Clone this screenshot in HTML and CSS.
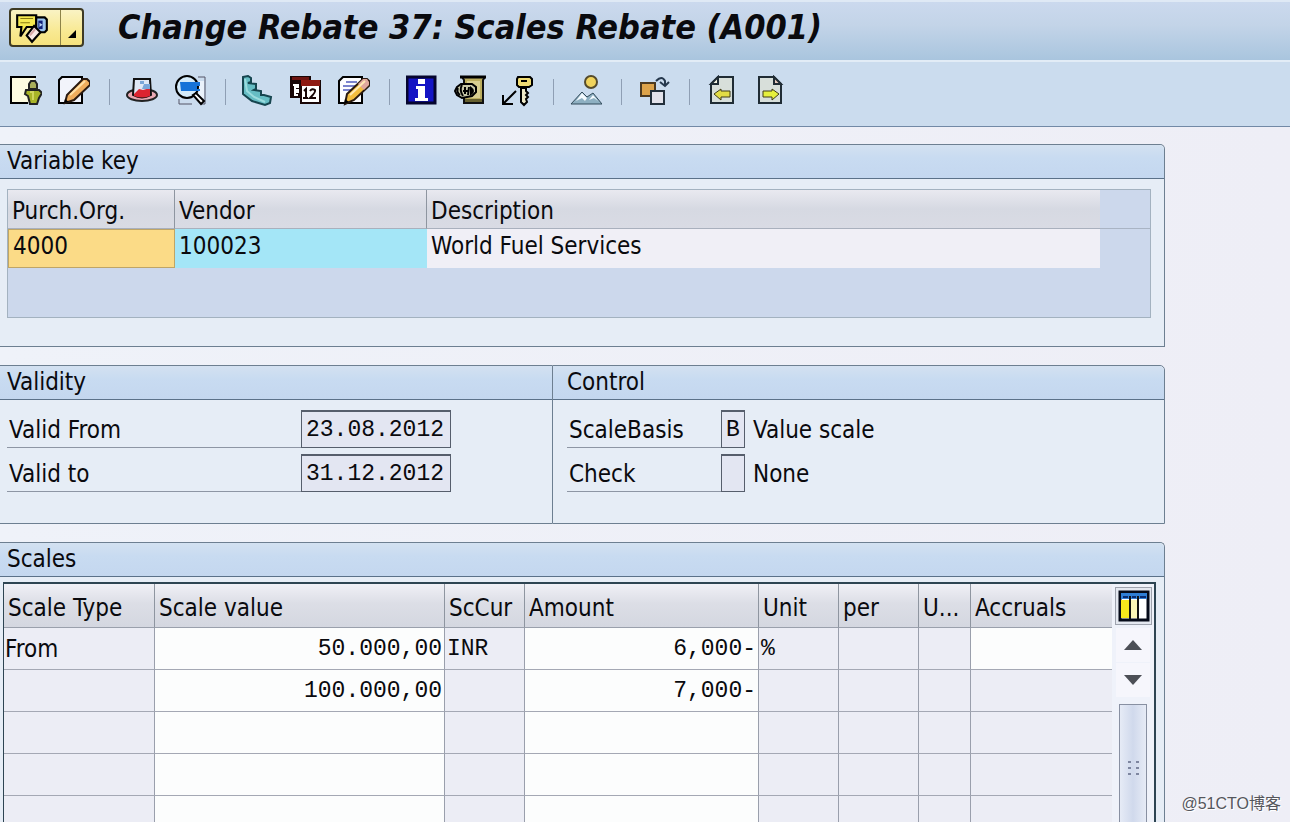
FILE: index.html
```html
<!DOCTYPE html>
<html lang="en">
<head>
<meta charset="utf-8">
<title>Change Rebate 37: Scales Rebate (A001)</title>
<link rel="stylesheet" href="styles.css">
</head>
<body>
<header class="titlebar">
  <div class="menu-group">
    <button class="menu-main" aria-label="Services for object">
      <svg width="36" height="34" viewBox="0 0 34 32">
        <path d="M3 4h18v11h-9l-6 9 1-9H3z" fill="#f6ea50" stroke="#000" stroke-width="2"/>
        <path d="M6 7h12M6 11h9" stroke="#8a7c10" stroke-width="1"/>
        <path d="M21 6h8l2 2v10l-2 2h-8z" fill="#9cc4ee" stroke="#000" stroke-width="2"/>
        <path d="M23 9h4v8h-4z" fill="#10207a"/>
        <path d="M24 11l3 2-3 2z" fill="#bcd8f6"/>
        <path d="M12 23l7-9 6 6-8 9z" fill="#f8e8e6" stroke="#000" stroke-width="2"/>
        <path d="M15 23l5-6" stroke="#d8a8a8" stroke-width="2"/>
      </svg>
    </button>
    <button class="menu-more" aria-label="More services">
      <svg width="10" height="10" viewBox="0 0 10 10"><path d="M9 1v8H1z" fill="#000"/></svg>
    </button>
  </div>
  <h1>Change Rebate 37: Scales Rebate (A001)</h1>
</header>

<nav class="toolbar" aria-label="Application toolbar">
  <button aria-label="Other rebate">
    <svg viewBox="0 0 32 32"><path d="M1 2h24v26H1z" fill="#fdfbe0"/><path d="M26 2H1v26h17" fill="none" stroke="#000" stroke-width="2"/><path d="M19 14v-5l2-3h4l2 3v5z" fill="#a8ad5a" stroke="#222" stroke-width="2"/><path d="M16 15h13l3 3-3 5-2 6h-7l-2-8-3-2z" fill="#a9b428" stroke="#222" stroke-width="2"/><path d="M20 17h3v8" fill="none" stroke="#d0d65c" stroke-width="2"/></svg>
  </button>
  <button aria-label="Change condition">
    <svg viewBox="0 0 32 32"><path d="M4 2h20v26H1V5z" fill="#f2f4fb" stroke="#000" stroke-width="2"/><path d="M9 20L25 4h4l3 3v3L16 25l-9 3z" fill="#efad5d" stroke="#2a1a10" stroke-width="2"/><path d="M12 20L27 6" stroke="#ffe0a6" stroke-width="2"/><path d="M6 28l1-4 4 3z" fill="#000"/></svg>
  </button>
  <span class="sep"></span>
  <button aria-label="Header details">
    <svg viewBox="0 0 32 32"><ellipse cx="16" cy="20" rx="15" ry="6" fill="#e9a9b3" stroke="#222" stroke-width="2"/><path d="M8 4h16l1 16q-9 5-18 0z" fill="#dfe8f6" stroke="#111" stroke-width="2"/><path d="M8 19l5-5 4 1 7-2v8q-8 3-16 0z" fill="#dc2430"/><path d="M14 6h4v3h-4zM18 9h6v5h-8z" fill="#7aa6d8"/></svg>
  </button>
  <button aria-label="Details">
    <svg viewBox="0 0 32 32"><path d="M24 2h7v27h-4M18 29H5v-5" fill="none" stroke="#556" stroke-width="1"/><path d="M25 6h5v17h-6z" fill="#eaf2fb"/><circle cx="13" cy="12" r="11" fill="#d5ebfa" stroke="#000" stroke-width="2"/><path d="M6 7h20v4h-3v3h3v2H7z" fill="#1673d8"/><path d="M19 20l3-2 8 8-3 3z" fill="#fff" stroke="#000" stroke-width="2"/></svg>
  </button>
  <span class="sep"></span>
  <button aria-label="Scales">
    <svg viewBox="0 0 32 32"><path d="M1 2l5-1 3 2v4l-3 1 8 1v5l-2 1 7 1v4h3l7 2-1 6-5 2-13-4-9-7z" fill="#66bdc4" stroke="#16454f" stroke-width="2"/><path d="M3 4l2 12 7 6 11 5" fill="none" stroke="#9bdcde" stroke-width="2"/></svg>
  </button>
  <button aria-label="Validity periods">
    <svg viewBox="0 0 32 32"><path d="M0 1h21v6H12v16H0z" fill="#180606"/><path d="M2 2h17v3H2z" fill="#6d1410"/><path d="M3 10h5v2H5v3h3v2H5v3h3" fill="none" stroke="#fff" stroke-width="2"/><path d="M11 6h19v22H11z" fill="#fff" stroke="#180606" stroke-width="2"/><path d="M11 5h19v6H11z" fill="#8e1a12"/><path d="M14 16l2-2v9M13 23h5M20 16q2-3 5-1 1 2-5 8h6" fill="none" stroke="#180606" stroke-width="2"/></svg>
  </button>
  <button aria-label="Texts">
    <svg viewBox="0 0 32 32"><path d="M5 2h19v26H1V6z" fill="#fdfdff" stroke="#000" stroke-width="2"/><path d="M8 7h11M5 11h12M5 15h8" stroke="#7b83cd" stroke-width="2"/><path d="M9 19L25 4h4l3 3v3L16 25l-9 4z" fill="#f3bd3e" stroke="#2a1a10" stroke-width="2"/><path d="M20 9l5-5h4l2 3v3l-5 5z" fill="#e0a89d"/><path d="M12 20L27 6" stroke="#ffe9b4" stroke-width="2"/><path d="M6 29l1-5 4 3z" fill="#000"/></svg>
  </button>
  <span class="sep"></span>
  <button aria-label="Information">
    <svg viewBox="0 0 32 32"><path d="M1 2h28v26H1z" fill="#1414c4" stroke="#05052e" stroke-width="3"/><path d="M12 4h7v5h-7zM10 11h9v12h3v3H9v-3h3v-9h-2z" fill="#fff"/></svg>
  </button>
  <button aria-label="Condition info">
    <svg viewBox="0 0 32 32"><path d="M8 2h23l-2 3v23H10V5z" fill="#bcae5e" stroke="#111" stroke-width="2"/><path d="M6 2h26" stroke="#000" stroke-width="3"/><path d="M13 6h13v17H13z" fill="#d9cf90"/><path d="M11 24h17v3H11z" fill="#66602f"/><path d="M3 12l4-3h11l4 3v5l-4 4-10 2-5-3-2-4z" fill="#c8c8a8" stroke="#000" stroke-width="2"/><path d="M4 13q-2 4 2 7M8 10q-3 5 1 11M11 12v7M9 16h5M15 12l-1 8M17 13q4 3 0 6z" stroke="#000" stroke-width="2" fill="none"/></svg>
  </button>
  <button aria-label="Key display">
    <svg viewBox="0 0 32 32"><path d="M16 2h12l2 2v6l-3 2H17l-2-2V4z" fill="#f0dc74" stroke="#000" stroke-width="2"/><path d="M19 6h6" stroke="#000" stroke-width="2"/><path d="M19 13h5v3l2 2-2 2 2 2-2 2 1 3-3 3-3-3z" fill="#eee9c8" stroke="#000" stroke-width="2"/><path d="M14 16L1 29M1 20v9h10" fill="none" stroke="#000" stroke-width="2"/></svg>
  </button>
  <span class="sep"></span>
  <button aria-label="Overview">
    <svg viewBox="0 0 32 32"><circle cx="21" cy="7" r="6" fill="#f0d35c" stroke="#554b2b" stroke-width="2"/><path d="M1 29l11-12 5 5 6-4 9 11z" fill="#8eb0c2" stroke="#334b5a" stroke-width="1"/><path d="M12 18l-6 8 6-3 3 3 2-3zM23 20l-4 5 5-2 4 3z" fill="#f5fbff"/></svg>
  </button>
  <span class="sep"></span>
  <button aria-label="Exchange">
    <svg viewBox="0 0 32 32"><path d="M3 8h14v13H3z" fill="#dda34a" stroke="#4d3a20" stroke-width="2"/><path d="M13 16h13v13H13z" fill="#e2e2ea" stroke="#222f3b" stroke-width="2"/><path d="M18 6q6-6 9 0v5M22 7l5 4 4-4" fill="none" stroke="#26384c" stroke-width="2"/></svg>
  </button>
  <span class="sep"></span>
  <button aria-label="Previous page">
    <svg viewBox="0 0 32 32"><path d="M12 2h15v26H5V9z" fill="#d8dfda" stroke="#202c34" stroke-width="2"/><path d="M5 9h7V2z" fill="#f5f6e4" stroke="#202c34" stroke-width="2"/><path d="M8 19l7-5v2h9v6h-9v3z" fill="#e2dc45" stroke="#403d16" stroke-width="1"/></svg>
  </button>
  <button aria-label="Next page">
    <svg viewBox="0 0 32 32"><path d="M5 2h15l7 7v19H5z" fill="#d8dfda" stroke="#202c34" stroke-width="2"/><path d="M20 2v7h7z" fill="#e7c9bd" stroke="#202c34" stroke-width="2"/><path d="M25 19l-7-5v2H9v6h9v3z" fill="#e6f03d" stroke="#403d16" stroke-width="1"/></svg>
  </button>
</nav>

<main class="content">
  <section class="panel">
    <h2>Variable key</h2>
    <div class="key-box">
      <table class="key-table">
        <colgroup><col class="k-org"><col class="k-vendor"><col><col class="k-rest"></colgroup>
        <thead><tr><th>Purch.Org.</th><th>Vendor</th><th>Description</th><td class="rest"></td></tr></thead>
        <tbody><tr><td class="org">4000</td><td class="vendor">100023</td><td class="desc">World Fuel Services</td><td class="rest"></td></tr></tbody>
      </table>
    </div>
  </section>

  <div class="pair">
    <section class="panel panel-validity">
      <h2>Validity</h2>
      <div class="fields">
        <div class="field"><label for="from">Valid From</label><input id="from" class="date" value="23.08.2012" readonly></div>
        <div class="field"><label for="to">Valid to</label><input id="to" class="date" value="31.12.2012" readonly></div>
      </div>
    </section>
    <section class="panel panel-control">
      <h2>Control</h2>
      <div class="fields">
        <div class="field"><label for="basis">ScaleBasis</label><input id="basis" class="code" value="B" readonly><span class="note">Value scale</span></div>
        <div class="field"><label for="check">Check</label><input id="check" class="code" value="" readonly><span class="note">None</span></div>
      </div>
    </section>
  </div>

  <section class="panel panel-scales">
    <h2>Scales</h2>
    <div class="grid">
      <table class="scale-table">
        <colgroup><col class="s-type"><col class="s-value"><col class="s-small"><col class="s-amount"><col class="s-small"><col class="s-small"><col class="s-uom"><col></colgroup>
        <thead><tr><th>Scale Type</th><th>Scale value</th><th>ScCur</th><th>Amount</th><th>Unit</th><th>per</th><th>U...</th><th>Accruals</th></tr></thead>
        <tbody>
          <tr><td>From</td><td class="edit"><input aria-label="Scale value 1" value="50.000,00"></td><td class="mono">INR</td><td class="edit"><input aria-label="Amount 1" value="6,000-"></td><td class="mono">%</td><td></td><td></td><td class="edit"><input aria-label="Accruals 1"></td></tr>
          <tr><td></td><td class="edit"><input aria-label="Scale value 2" value="100.000,00"></td><td></td><td class="edit"><input aria-label="Amount 2" value="7,000-"></td><td></td><td></td><td></td><td></td></tr>
          <tr><td></td><td class="edit"><input aria-label="Scale value 3"></td><td></td><td class="edit"><input aria-label="Amount 3"></td><td></td><td></td><td></td><td></td></tr>
          <tr><td></td><td class="edit"><input aria-label="Scale value 4"></td><td></td><td class="edit"><input aria-label="Amount 4"></td><td></td><td></td><td></td><td></td></tr>
          <tr><td></td><td class="edit"><input aria-label="Scale value 5"></td><td></td><td class="edit"><input aria-label="Amount 5"></td><td></td><td></td><td></td><td></td></tr>
        </tbody>
      </table>
      <div class="side">
        <button class="config" aria-label="Table settings">
          <svg width="32" height="32" viewBox="0 0 32 32"><path d="M2 2h28v28H2z" fill="#fff" stroke="#050a18" stroke-width="3"/><path d="M3 10h9v18H3z" fill="#f7e81c"/><path d="M13 10h6v18h-6z" fill="#fbf6b6"/><path d="M3 3h26v6H3z" fill="#2f7fd6"/><path d="M12 6v23M20 6v23" stroke="#111" stroke-width="2"/><path d="M5 7h5M14 7h4M22 7h6" stroke="#0a2b70" stroke-width="2"/></svg>
        </button>
        <button class="arrow" aria-label="Scroll up"><svg width="18" height="10" viewBox="0 0 18 10"><path d="M9 0l9 10H0z" fill="#4c4f56"/></svg></button>
        <button class="arrow" aria-label="Scroll down"><svg width="18" height="10" viewBox="0 0 18 10"><path d="M9 10l9-10H0z" fill="#4c4f56"/></svg></button>
        <div class="thumb"><svg width="14" height="18" viewBox="0 0 14 18"><path d="M1 3h3M9 3h3M1 9h3M9 9h3M1 15h3M9 15h3" stroke="#7e86a0" stroke-width="2"/></svg></div>
      </div>
    </div>
  </section>
</main>
<div class="watermark">@51CTO博客</div>
</body>
</html>
```
FILE: styles.css
```css
* { box-sizing: border-box; }

body {
  margin: 0;
  height: 100vh;
  overflow: hidden;
  display: flex;
  flex-direction: column;
  background: #eeeef6;
  color: #0a0a0e;
  font-family: "DejaVu Sans Condensed", "DejaVu Sans", sans-serif;
  font-size: 24px;
  line-height: 28px;
}

button {
  padding: 0;
  border: 0;
  background: none;
}

svg { display: block; }

input {
  font-family: "Liberation Mono", monospace;
  font-size: 23px;
  color: #0a0a0e;
  border: 0;
  border-radius: 0;
  outline: 0;
}

.titlebar {
  flex: none;
  display: flex;
  align-items: flex-start;
  gap: 34px;
  height: 62px;
  padding: 6px 9px 0;
  background: linear-gradient(#cbd9ee, #c3d4e8 40%, #a9c5de);
  border-top: 2px solid #dfe9f5;
  border-bottom: 2px solid #e2ecf6;
}

.titlebar h1 {
  margin: 0;
  font-size: 34px;
  line-height: 38px;
  font-style: italic;
  font-weight: bold;
  white-space: nowrap;
}

.menu-group {
  display: flex;
  width: 75px;
  height: 39px;
  border: 2px solid #3e3a24;
  border-radius: 4px;
  background: linear-gradient(#faf3c4, #f8e993 60%, #f6e27e);
}

.menu-main {
  flex: 1;
  padding-left: 3px;
}

.menu-more {
  display: flex;
  align-items: flex-end;
  justify-content: center;
  width: 22px;
  padding-bottom: 6px;
  border-left: 1px solid #8d8348;
}

.toolbar {
  flex: none;
  display: flex;
  gap: 16px;
  height: 65px;
  padding: 13px 10px 0;
  background: #cbdcee;
  border-bottom: 1px solid #7289a6;
}

.toolbar button,
.toolbar svg {
  width: 32px;
  height: 32px;
}

.toolbar .sep {
  width: 4px;
  height: 26px;
  margin-top: 4px;
  border-right: 1px solid #8f9fb4;
}

.content {
  flex: 1;
  min-height: 0;
  display: flex;
  flex-direction: column;
  gap: 18px;
  padding: 17px 125px 0 0;
  background: linear-gradient(to right, #eff2f9, #eeeef6);
}

.panel {
  border: 1px solid #6d7f91;
  border-left: 0;
  border-top-right-radius: 5px;
  background: #e6edf6;
}

.panel h2 {
  margin: 0;
  height: 34px;
  padding: 2px 7px;
  font-size: 24px;
  line-height: 28px;
  font-weight: normal;
  border-bottom: 1px solid #5b7189;
  border-top-right-radius: 5px;
  background: linear-gradient(#d3e1f1, #c8dbf1 40%, #c4d7ef);
}

.key-box {
  height: 129px;
  margin: 10px 13px 28px 7px;
  border: 1px solid #a3b2c0;
  background: #ccd8ec;
}

table {
  width: 100%;
  table-layout: fixed;
  border-collapse: separate;
  border-spacing: 0;
}

th, td {
  padding: 0 4px;
  font-weight: normal;
  text-align: left;
  white-space: nowrap;
  overflow: hidden;
}

.k-org { width: 167px; }
.k-vendor { width: 252px; }
.k-rest { width: 50px; }

.key-table th {
  height: 39px;
  padding-top: 4px;
  border-right: 1px solid #8e95a0;
  border-bottom: 1px solid #a9b0bd;
  background: linear-gradient(#e9e9f0, #d6d9e2 50%, #d9dbe4);
}

.key-table th:nth-child(3) { border-right: 0; }
.key-table thead .rest { border-bottom: 1px solid #a9b4c4; }

.key-table tbody td {
  height: 39px;
  padding-bottom: 5px;
}

.key-table .org {
  border: 1px solid #bfa566;
  background: #fbdb87;
}

.key-table .vendor { background: #a4e6f7; }
.key-table .desc { background: #f0eff6; }

.pair {
  display: grid;
  grid-template-columns: 552px 1fr;
}

.panel-validity {
  border-right: 0;
  border-radius: 0;
}

.panel-validity h2 { border-radius: 0; }

.panel-control { border-left: 1px solid #6d7f91; }
.panel-control h2 { padding-left: 14px; }

.fields {
  display: flex;
  flex-direction: column;
  gap: 6px;
  padding: 10px 7px 31px;
}

.panel-control .fields { padding-left: 14px; }

.field {
  display: flex;
  height: 38px;
}

.field label {
  width: 294px;
  padding: 6px 2px 0;
  border-bottom: 1px solid #8e96a4;
}

.panel-control label { width: 154px; }

.field input {
  border: 1px solid #565e6c;
  border-top-width: 2px;
  background: #e3e6f2;
}

.field .date {
  width: 150px;
  padding: 0 4px;
}

.field .code {
  width: 24px;
  padding: 0 4px;
}

.note { padding: 6px 8px 0; }

.panel-scales {
  flex: 1;
  min-height: 0;
  border-bottom: 0;
}

.grid {
  display: flex;
  height: 100%;
  margin: 5px 8px 0 3px;
  border: 2px solid #2d4452;
  border-left-width: 1px;
  border-bottom: 0;
  background: #eeeef6;
}

.scale-table {
  flex: 1;
  min-width: 0;
  align-self: flex-start;
}

.s-type { width: 151px; }
.s-value { width: 290px; }
.s-small { width: 80px; }
.s-amount { width: 234px; }
.s-uom { width: 52px; }

.scale-table th {
  height: 44px;
  padding-top: 5px;
  border-right: 1px solid #8e95a0;
  border-bottom: 1px solid #9aa0ac;
  background: linear-gradient(#f0f0f6, #dcdee6 45%, #d4d7e0);
}

.scale-table td {
  height: 42px;
  padding: 0 0 0 1px;
  border-right: 1px solid #9a9fac;
  border-bottom: 1px solid #a4a8b4;
  background: #ecedf5;
}

.scale-table th:last-child,
.scale-table td:last-child { border-right: 0; }

.scale-table .edit { background: #fcfdfd; }

.scale-table .edit input {
  display: block;
  width: 100%;
  height: 40px;
  padding: 0 2px 0 0;
  text-align: right;
  background: none;
}

.scale-table .mono {
  padding-left: 2px;
  font-family: "Liberation Mono", monospace;
  font-size: 23px;
}

.side {
  flex: none;
  width: 42px;
  display: flex;
  flex-direction: column;
  align-items: center;
  background: #eff2fa;
}

.config {
  width: 37px;
  height: 38px;
  margin: 3px 0;
  padding: 2px;
  border: 1px solid #9ea3ae;
  background: #e4e8f0;
}

.arrow {
  display: flex;
  align-items: center;
  justify-content: center;
  width: 34px;
  height: 34px;
  margin-bottom: 1px;
  background: #f6f6fc;
}

.thumb {
  flex: 1;
  width: 28px;
  margin-top: 6px;
  padding: 54px 7px 0;
  border: 1px solid #8890a2;
  border-bottom: 0;
  background: linear-gradient(to right, #e6ebf6, #d0d9ec 50%, #e6ebf6);
}

.watermark {
  position: absolute;
  right: 9px;
  bottom: 8px;
  font-family: "Liberation Sans", "Noto Sans CJK SC", sans-serif;
  font-size: 16px;
  line-height: 20px;
  color: #55565c;
  text-shadow: 1px 1px 0 #fff;
}
```
